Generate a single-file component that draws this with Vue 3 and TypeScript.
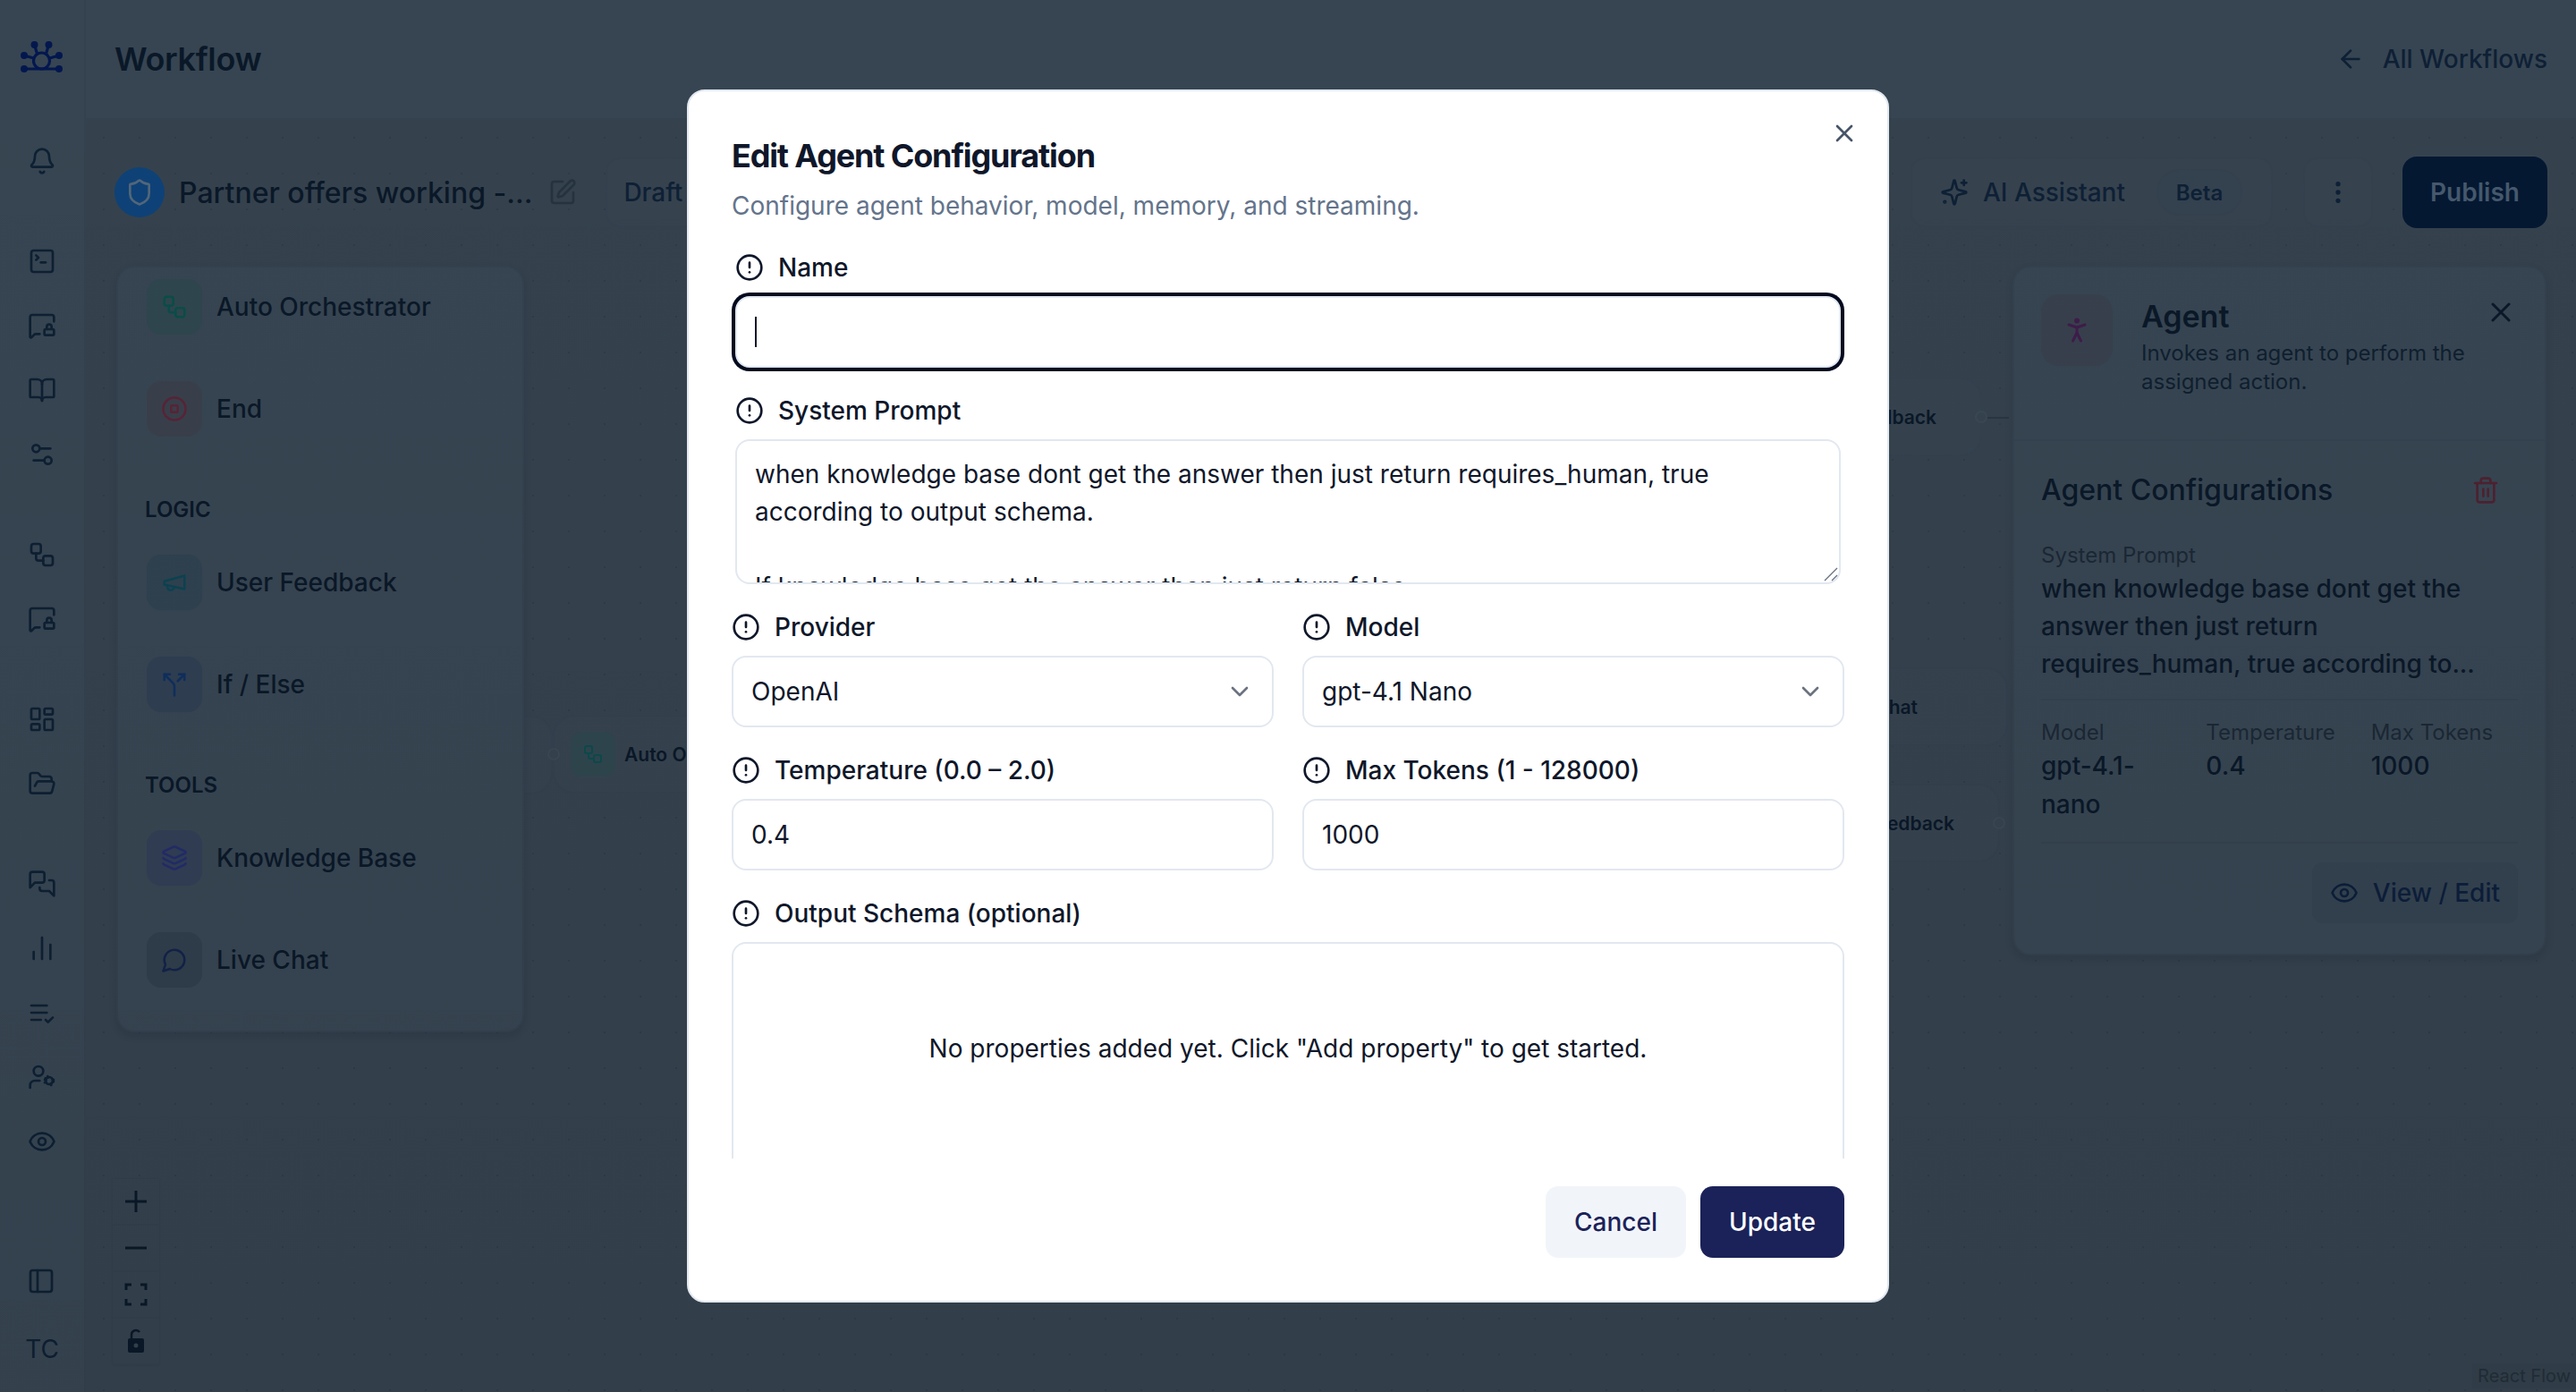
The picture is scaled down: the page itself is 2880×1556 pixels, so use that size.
<script setup lang="ts">
import { h } from 'vue';

const ICONS: Record<string, string> = {
    bell: '<path d="M10.3 21a1.94 1.94 0 0 0 3.4 0"/><path d="M3.3 15.3A1 1 0 0 0 4 17h16a1 1 0 0 0 .7-1.7C19.4 14 18 12.500 18 8A6 6 0 0 0 6 8c0 4.500-1.400 6-2.700 7.300"/>',
    terminal: '<path d="m7 11 2-2-2-2"/><path d="M11 13h4"/><rect x="3" y="3" width="18" height="18" rx="2"/>',
    chatLock: '<path d="M22 8.500V5a2 2 0 0 0-2-2H4a2 2 0 0 0-2 2v16.286a.71.71 0 0 0 1.212.502l2.202-2.202A2 2 0 0 1 6.828 19H10"/><path d="M20 15v-2a2 2 0 0 0-4 0v2"/><rect x="14" y="15" width="8" height="5" rx="1"/>',
    book: '<path d="M12 7v14"/><path d="M3 18a1 1 0 0 1-1-1V4a1 1 0 0 1 1-1h5a4 4 0 0 1 4 4 4 4 0 0 1 4-4h5a1 1 0 0 1 1 1v13a1 1 0 0 1-1 1h-6a3 3 0 0 0-3 3 3 3 0 0 0-3-3z"/>',
    sliders: '<path d="M14 17H5"/><path d="M19 7h-9"/><circle cx="17" cy="17" r="3"/><circle cx="7" cy="7" r="3"/>',
    workflow: '<rect x="3" y="3" width="8" height="8" rx="2"/><path d="M7 11v4a2 2 0 0 0 2 2h4"/><rect x="13" y="13" width="8" height="8" rx="2"/>',
    dashboard: '<rect x="3" y="3" width="7" height="9" rx="1"/><rect x="14" y="3" width="7" height="5" rx="1"/><rect x="14" y="12" width="7" height="9" rx="1"/><rect x="3" y="16" width="7" height="5" rx="1"/>',
    folder: '<path d="m6 14 1.500-2.900A2 2 0 0 1 9.240 10H20a2 2 0 0 1 1.940 2.500l-1.540 6a2 2 0 0 1-1.950 1.500H4a2 2 0 0 1-2-2V5a2 2 0 0 1 2-2h3.900a2 2 0 0 1 1.690.9l.81 1.200a2 2 0 0 0 1.670.9H18a2 2 0 0 1 2 2v2"/>',
    chats: '<path d="M14 9a2 2 0 0 1-2 2H6l-4 4V4a2 2 0 0 1 2-2h8a2 2 0 0 1 2 2z"/><path d="M18 9h2a2 2 0 0 1 2 2v11l-4-4h-6a2 2 0 0 1-2-2v-1"/>',
    bars: '<path d="M5 21v-6"/><path d="M12 21V3"/><path d="M19 21V9"/>',
    listCheck: '<path d="M11 18H3"/><path d="m15 18 2 2 4-4"/><path d="M16 12H3"/><path d="M16 6H3"/>',
    userCog: '<path d="M10 15H6a4 4 0 0 0-4 4v2"/><path d="m14.300 16.600 1-.4"/><path d="m15.300 13.800-.4-1"/><path d="m17.100 12.300-.4-1"/><path d="m19.700 18.700-.4-1"/><path d="m20.700 16.200 1-.4"/><path d="m20.700 13.800 1 .4"/><path d="m14.300 14.200 1 .4"/><circle cx="18" cy="15" r="3"/><circle cx="9" cy="7" r="4"/>',
    eye: '<path d="M2.062 12.348a1 1 0 0 1 0-.696 10.750 10.750 0 0 1 19.876 0 1 1 0 0 1 0 .696 10.750 10.750 0 0 1-19.876 0"/><circle cx="12" cy="12" r="3"/>',
    panel: '<rect x="3" y="3" width="18" height="18" rx="2"/><path d="M9 3v18"/>',
    shield: '<path d="M20 13c0 5-3.500 7.500-7.660 8.950a1 1 0 0 1-.67-.01C7.500 20.500 4 18 4 13V6a1 1 0 0 1 1-1c2 0 4.500-1.200 6.240-2.720a1.170 1.170 0 0 1 1.520 0C14.510 3.810 17 5 19 5a1 1 0 0 1 1 1z"/>',
    pen: '<path d="M12 3H5a2 2 0 0 0-2 2v14a2 2 0 0 0 2 2h14a2 2 0 0 0 2-2v-7"/><path d="M18.375 2.625a1 1 0 0 1 3 3l-9.013 9.014a2 2 0 0 1-.853.505l-2.873.84a.5.5 0 0 1-.62-.62l.84-2.873a2 2 0 0 1 .506-.852z"/>',
    arrowLeft: '<path d="m12 19-7-7 7-7"/><path d="M19 12H5"/>',
    sparkles: '<path d="M9.937 15.500A2 2 0 0 0 8.500 14.063l-6.135-1.582a.5.5 0 0 1 0-.962L8.500 9.936A2 2 0 0 0 9.937 8.500l1.582-6.135a.5.5 0 0 1 .963 0L14.063 8.500A2 2 0 0 0 15.500 9.937l6.135 1.581a.5.5 0 0 1 0 .964L15.500 14.063a2 2 0 0 0-1.437 1.437l-1.582 6.135a.5.5 0 0 1-.963 0z"/><path d="M20 2v4"/><path d="M22 4h-4"/><circle cx="4" cy="20" r=".6"/>',
    kebab: '<circle cx="12" cy="12" r="1"/><circle cx="12" cy="5" r="1"/><circle cx="12" cy="19" r="1"/>',
    stop: '<circle cx="12" cy="12" r="10"/><rect x="9" y="9" width="6" height="6" rx="1"/>',
    megaphone: '<path d="m3 11 18-5v12L3 14v-3z"/><path d="M11.600 16.800a3 3 0 1 1-5.800-1.600"/>',
    split: '<path d="M16 3h5v5"/><path d="M8 3H3v5"/><path d="M12 22v-8.300a4 4 0 0 0-1.172-2.872L3 3"/><path d="m15 9 6-6"/>',
    layers: '<path d="M12.830 2.180a2 2 0 0 0-1.660 0L2.600 6.080a1 1 0 0 0 0 1.830l8.580 3.910a2 2 0 0 0 1.660 0l8.580-3.900a1 1 0 0 0 0-1.830z"/><path d="M2 12a1 1 0 0 0 .58.91l8.600 3.910a2 2 0 0 0 1.650 0l8.580-3.900A1 1 0 0 0 22 12"/><path d="M2 17a1 1 0 0 0 .58.91l8.600 3.910a2 2 0 0 0 1.650 0l8.580-3.900A1 1 0 0 0 22 17"/>',
    chat: '<path d="M7.900 20A9 9 0 1 0 4 16.100L2 22z"/>',
    close: '<path d="M18 6 6 18"/><path d="m6 6 12 12"/>',
    person: '<circle cx="12" cy="5" r="1"/><path d="m9 20 3-6 3 6"/><path d="m6 8 6 2 6-2"/><path d="M12 10v4"/>',
    trash: '<path d="M10 11v6"/><path d="M14 11v6"/><path d="M19 6v14a2 2 0 0 1-2 2H7a2 2 0 0 1-2-2V6"/><path d="M3 6h18"/><path d="M8 6V4a2 2 0 0 1 2-2h4a2 2 0 0 1 2 2v2"/>',
    alert: '<circle cx="12" cy="12" r="10"/><path d="M12 8v4"/><path d="M12 16h.01"/>',
    chevron: '<path d="m6 9 6 6 6-6"/>',
};

const Icon = (props: { name: string; size?: number }) =>
    h('svg', {
        width: props.size ?? 32,
        height: props.size ?? 32,
        viewBox: '0 0 24 24',
        fill: 'none',
        stroke: 'currentColor',
        'stroke-width': 2,
        'stroke-linecap': 'round',
        'stroke-linejoin': 'round',
        innerHTML: ICONS[props.name],
    });
Icon.props = ['name', 'size'];

const navGroups = [
    ['bell'],
    ['terminal', 'chatLock', 'book', 'sliders'],
    ['workflow', 'chatLock'],
    ['dashboard', 'folder'],
    ['chats', 'bars', 'listCheck', 'userCog', 'eye'],
];

const paletteGroups = [
    {
        title: '',
        items: [
            { label: 'Auto Orchestrator', icon: 'workflow', tone: 'green' },
            { label: 'End', icon: 'stop', tone: 'red' },
        ],
    },
    {
        title: 'Logic',
        items: [
            { label: 'User Feedback', icon: 'megaphone', tone: 'teal' },
            { label: 'If / Else', icon: 'split', tone: 'blue' },
        ],
    },
    {
        title: 'Tools',
        items: [
            { label: 'Knowledge Base', icon: 'layers', tone: 'indigo' },
            { label: 'Live Chat', icon: 'chat', tone: 'slate' },
        ],
    },
];

// canvas coordinates, measured from the top left of the flow pane
const flowNodes = [
    { label: '', left: 404, top: 666, width: 118, pad: 0, handle: false, start: false },
    { label: 'Auto Orchestrator', left: 522, top: 665, width: 320, pad: 0, handle: true, start: true },
    { label: 'User Feedback', left: 1860, top: 288, width: 260, pad: 49, handle: true, start: false },
    { label: 'Live Chat', left: 1860, top: 612, width: 289, pad: 99, handle: false, start: false },
    { label: 'User Feedback', left: 1860, top: 742, width: 280, pad: 49, handle: true, start: false },
];

const stats = [
    { label: 'Model', value: 'gpt-4.1-nano' },
    { label: 'Temperature', value: '0.4' },
    { label: 'Max Tokens', value: '1000' },
];

const promptText =
    'when knowledge base dont get the answer then just return requires_human, true according to output schema.\n\nIf knowledge base get the answer then just return false';
const promptPreview = 'when knowledge base dont get the answer then just return requires_human, true according to...';
</script>

<template>
    <div class="page">
        <aside class="sidebar">
            <div class="logo">
                <svg width="48" height="40" viewBox="0 0 48 40" fill="none" stroke="currentColor" stroke-width="3.200" stroke-linecap="round">
                    <circle cx="23.500" cy="24" r="9" />
                    <path d="M15.500 6 18.500 16M31.500 6 28.500 16M4 18 14.500 21M43 18 32.500 21M4 33H43" />
                    <g fill="currentColor" stroke="none">
                        <circle cx="15.500" cy="6" r="4" />
                        <circle cx="31.500" cy="6" r="4" />
                        <circle cx="4" cy="18" r="4" />
                        <circle cx="43" cy="18" r="4" />
                        <circle cx="4" cy="33" r="4" />
                        <circle cx="43" cy="33" r="4" />
                    </g>
                </svg>
            </div>
            <div v-for="(group, i) in navGroups" :key="i" class="nav-group">
                <span v-for="(name, j) in group" :key="j" class="nav-item"><Icon :name="name" /></span>
            </div>
            <div class="sidebar-foot">
                <span class="nav-item"><Icon name="panel" /></span>
                <span class="avatar">TC</span>
            </div>
        </aside>

        <div class="main">
            <header class="topbar">
                <h1>Workflow</h1>
                <a class="back-link"><Icon name="arrowLeft" /><span>All Workflows</span></a>
            </header>

            <section class="canvas">
                <div
                    v-for="(node, i) in flowNodes"
                    :key="i"
                    class="flow-node"
                    :class="{ start: node.start }"
                    :style="{ left: node.left + 'px', top: node.top + 'px', width: node.width + 'px', paddingRight: node.pad + 'px' }"
                >
                    <template v-if="node.label">
                        <span class="flow-icon"><Icon name="workflow" :size="24" /></span>
                        <span class="flow-label">{{ node.label }}</span>
                    </template>
                    <i v-if="node.handle" class="flow-handle"></i>
                </div>
                <i class="flow-edge"></i>

                <div class="toolbar">
                    <div class="toolbar-left">
                        <span class="shield"><Icon name="shield" :size="32" /></span>
                        <span class="flow-name">Partner offers working -...</span>
                        <span class="pen"><Icon name="pen" /></span>
                        <button class="ghost-btn draft">Draft</button>
                    </div>
                    <div class="toolbar-right">
                        <button class="ghost-btn assistant">
                            <Icon name="sparkles" />
                            <span>AI Assistant</span>
                            <span class="beta">Beta</span>
                        </button>
                        <button class="ghost-btn kebab"><Icon name="kebab" /></button>
                        <button class="publish">Publish</button>
                    </div>
                </div>

                <div class="palette">
                    <div v-for="group in paletteGroups" :key="group.title" class="palette-group">
                        <h4 v-if="group.title">{{ group.title }}</h4>
                        <div v-for="item in group.items" :key="item.label" class="palette-item">
                            <span class="palette-icon" :class="item.tone"><Icon :name="item.icon" :size="30" /></span>
                            <span>{{ item.label }}</span>
                        </div>
                    </div>
                </div>

                <div class="details">
                    <div class="details-head">
                        <span class="agent-icon"><Icon name="person" :size="36" /></span>
                        <div>
                            <h3>Agent</h3>
                            <p>Invokes an agent to perform the assigned action.</p>
                        </div>
                        <span class="details-close"><Icon name="close" :size="36" /></span>
                    </div>
                    <div class="details-body">
                        <div class="details-title">
                            <h3>Agent Configurations</h3>
                            <span class="trash"><Icon name="trash" /></span>
                        </div>
                        <div class="prompt">
                            <label>System Prompt</label>
                            <p>{{ promptPreview }}</p>
                        </div>
                        <div class="stats">
                            <div v-for="stat in stats" :key="stat.label">
                                <label>{{ stat.label }}</label>
                                <p>{{ stat.value }}</p>
                            </div>
                        </div>
                        <div class="details-foot">
                            <button class="view-btn"><Icon name="eye" /><span>View / Edit</span></button>
                        </div>
                    </div>
                </div>

                <div class="zoom-controls">
                    <button>
                        <svg width="32" height="32" viewBox="0 0 32 32" stroke="currentColor" stroke-width="3"><path d="M4 16H28M16 4V28" /></svg>
                    </button>
                    <button>
                        <svg width="32" height="32" viewBox="0 0 32 32" stroke="currentColor" stroke-width="3"><path d="M4 16H28" /></svg>
                    </button>
                    <button>
                        <svg width="32" height="32" viewBox="0 0 32 32" fill="none" stroke="currentColor" stroke-width="3"><path d="M5 11V5H11M21 5H27V11M27 21V27H21M11 27H5V21" /></svg>
                    </button>
                    <button>
                        <svg width="32" height="32" viewBox="0 0 32 32">
                            <path d="M11 13V9a5 5 0 0 1 9-3" fill="none" stroke="currentColor" stroke-width="2.500" />
                            <path fill="currentColor" fill-rule="evenodd" d="M9 13H23a2 2 0 0 1 2 2V27a2 2 0 0 1-2 2H9a2 2 0 0 1-2-2V15a2 2 0 0 1 2-2ZM16 18.500a2.500 2.500 0 1 0 0 5 2.500 2.500 0 0 0 0-5Z" />
                        </svg>
                    </button>
                </div>
                <span class="attribution">React Flow</span>
            </section>
        </div>
        <div class="scrim"></div>

        <div class="dialog-wrap">
            <div class="dialog">
                <span class="dialog-close"><Icon name="close" /></span>
                <div class="dialog-head">
                    <h2>Edit Agent Configuration</h2>
                    <p>Configure agent behavior, model, memory, and streaming.</p>
                </div>
                <div class="dialog-body">
                    <div class="field inset">
                        <label><Icon name="alert" />Name</label>
                        <div class="caret-wrap">
                            <input class="control focused" type="text" />
                            <i class="caret"></i>
                        </div>
                    </div>
                    <div class="field inset">
                        <label><Icon name="alert" />System Prompt</label>
                        <div class="caret-wrap">
                            <textarea class="control prompt-input" :value="promptText"></textarea>
                            <svg class="grip" width="16" height="16" viewBox="0 0 16 16" stroke="#64707f" stroke-width="1.300">
                                <path d="M1 15 15 1M9 15 15 9" />
                            </svg>
                        </div>
                    </div>
                    <div class="field-row">
                        <div class="field">
                            <label><Icon name="alert" />Provider</label>
                            <div class="select-wrap">
                                <select class="control"><option>OpenAI</option></select>
                                <span class="chevron"><Icon name="chevron" /></span>
                            </div>
                        </div>
                        <div class="field">
                            <label><Icon name="alert" />Model</label>
                            <div class="select-wrap">
                                <select class="control"><option>gpt-4.1 Nano</option></select>
                                <span class="chevron"><Icon name="chevron" /></span>
                            </div>
                        </div>
                    </div>
                    <div class="field-row">
                        <div class="field">
                            <label><Icon name="alert" />Temperature (0.0 – 2.0)</label>
                            <input class="control" type="text" value="0.4" />
                        </div>
                        <div class="field">
                            <label><Icon name="alert" />Max Tokens (1 - 128000)</label>
                            <input class="control" type="text" value="1000" />
                        </div>
                    </div>
                    <div class="field">
                        <label><Icon name="alert" />Output Schema (optional)</label>
                        <div class="schema-box">No properties added yet. Click "Add property" to get started.</div>
                    </div>
                </div>
                <div class="dialog-foot">
                    <button class="btn-cancel">Cancel</button>
                    <button class="btn-update">Update</button>
                </div>
            </div>
        </div>
    </div>
</template>

<style>
html,
body {
    margin: 0;
    background: #303c48;
}
</style>

<style scoped>
* {
    box-sizing: border-box;
}
svg {
    display: block;
    flex-shrink: 0;
}
button {
    font: inherit;
    cursor: pointer;
}
h1,
h2,
h3,
h4,
p {
    margin: 0;
}

.page {
    position: relative;
    display: flex;
    width: 100%;
    height: 100vh;
    overflow: hidden;
    font-family: Inter, 'Liberation Sans', sans-serif;
    font-size: 28px;
    color: #0a1828;
    background: #374552;
}

/* sidebar */
.sidebar {
    display: flex;
    flex-direction: column;
    align-items: center;
    width: 96px;
    flex-shrink: 0;
    border-right: 2px solid #34414e;
    color: #0e2033;
}
.logo {
    display: flex;
    justify-content: center;
    height: 144px;
    padding-top: 44px;
    color: #03174f;
}
.nav-group {
    display: flex;
    flex-direction: column;
    margin-bottom: 40px;
}
.nav-item {
    display: flex;
    align-items: center;
    justify-content: center;
    width: 72px;
    height: 72px;
}
.sidebar-foot {
    display: flex;
    flex-direction: column;
    align-items: center;
    margin-top: auto;
    padding-bottom: 12px;
}
.sidebar-foot .nav-item {
    margin-right: 2px;
    margin-bottom: 4px;
}
.avatar {
    display: flex;
    align-items: center;
    justify-content: center;
    width: 64px;
    height: 72px;
    font-size: 28px;
}

/* top bar */
.main {
    display: flex;
    flex-direction: column;
    flex: 1;
    min-width: 0;
}
.topbar {
    display: flex;
    align-items: center;
    justify-content: space-between;
    height: 134px;
    flex-shrink: 0;
    padding: 0 32px;
    border-bottom: 2px solid #34414e;
}
.topbar h1 {
    font-size: 36px;
    font-weight: 600;
    line-height: 48px;
    letter-spacing: -0.01em;
}
.back-link {
    display: flex;
    align-items: center;
    gap: 20px;
    font-weight: 500;
    color: #0e2035;
}

/* flow pane */
.canvas {
    position: relative;
    flex: 1;
    padding: 41px 32px 0;
    background-color: #35424e;
    background-image: radial-gradient(#2f3b47 1.500px, transparent 1.500px);
    background-size: 40px 40px;
}
.flow-node {
    position: absolute;
    display: flex;
    align-items: center;
    justify-content: flex-end;
    height: 88px;
    border: 2px solid #34414e;
    border-radius: 24px;
    background: #36434f;
}
.flow-node.start {
    justify-content: flex-start;
    padding-left: 18px;
}
.flow-icon {
    display: flex;
    align-items: center;
    justify-content: center;
    width: 50px;
    height: 50px;
    margin-right: 10px;
    flex-shrink: 0;
    border-radius: 12px;
    background: #2f464e;
    color: #0d4a4d;
}
.flow-label {
    font-size: 21px;
    font-weight: 600;
    white-space: nowrap;
}
.flow-handle {
    position: absolute;
    top: 50%;
    right: -8px;
    width: 14px;
    height: 14px;
    margin-top: -7px;
    border: 2px solid #3a4854;
    border-radius: 50%;
    background: #36434f;
}
.flow-node.start .flow-handle {
    right: auto;
    left: -8px;
}
.flow-edge {
    position: absolute;
    left: 2126px;
    top: 332px;
    width: 24px;
    height: 2px;
    background: #2a3743;
}

.toolbar {
    position: relative;
    display: flex;
    align-items: center;
    justify-content: space-between;
}
.toolbar-left,
.toolbar-right {
    display: flex;
    align-items: center;
}
.shield {
    display: flex;
    align-items: center;
    justify-content: center;
    width: 56px;
    height: 56px;
    border-radius: 50%;
    background: #0e4278;
    color: #52677a;
}
.flow-name {
    margin-left: 16px;
    font-size: 32px;
    font-weight: 500;
    white-space: nowrap;
}
.pen {
    margin: 0 32px 0 18px;
    color: #25333f;
}
.ghost-btn {
    display: flex;
    align-items: center;
    height: 78px;
    border: 2px solid #34414e;
    border-radius: 16px;
    background: #36434f;
    color: #0e2035;
    font-weight: 500;
}
.draft {
    width: 200px;
    padding: 0 18px;
}
.assistant {
    width: 405px;
    padding: 0 32px 0 31px;
    gap: 16px;
}
.beta {
    display: flex;
    align-items: center;
    justify-content: center;
    width: 96px;
    height: 52px;
    margin-left: auto;
    border: 2px solid #34414e;
    border-radius: 26px;
    background: #344250;
    font-size: 24px;
    font-weight: 600;
}
.kebab {
    justify-content: center;
    width: 78px;
    margin-left: 34px;
}
.publish {
    width: 162px;
    height: 80px;
    margin-left: 33px;
    border: none;
    border-radius: 16px;
    background: #041832;
    color: #46596d;
    font-weight: 600;
}

.palette {
    position: absolute;
    left: 34px;
    top: 163px;
    width: 456px;
    height: 857px;
    padding: 13px 32px 0;
    border: 2px solid #34414e;
    border-radius: 20px;
    background: #374552;
    box-shadow: 0 4px 8px rgba(10, 20, 30, 0.12);
}
.palette-group {
    display: flex;
    flex-direction: column;
    gap: 52px;
}
.palette-group + .palette-group {
    margin-top: 65px;
}
.palette-group h4 {
    margin: 1px 0 -18px -2px;
    font-size: 24px;
    line-height: 32px;
    font-weight: 600;
    text-transform: uppercase;
}
.palette-item {
    display: flex;
    align-items: center;
    gap: 16px;
    font-weight: 500;
}
.palette-icon {
    display: flex;
    align-items: center;
    justify-content: center;
    width: 62px;
    height: 62px;
    border-radius: 16px;
}
.palette-icon.green {
    background: #2f464e;
    color: #0a4d4a;
}
.palette-icon.red {
    background: #39404b;
    color: #5a2337;
}
.palette-icon.teal {
    background: #2f4250;
    color: #0c4352;
}
.palette-icon.blue {
    background: #2f3f52;
    color: #0f2f5e;
}
.palette-icon.indigo {
    background: #313e55;
    color: #232c6b;
}
.palette-icon.slate {
    background: #303e4c;
    color: #14224a;
}

.details {
    position: absolute;
    right: 33px;
    top: 163px;
    width: 597px;
    border: 2px solid #34414e;
    border-radius: 20px;
    background: #374552;
    box-shadow: 0 4px 8px rgba(10, 20, 30, 0.12);
}
.details-head {
    position: relative;
    display: flex;
    gap: 32px;
    padding: 30px 30px 48px;
    border-bottom: 2px solid #34414e;
}
.agent-icon {
    display: flex;
    align-items: center;
    justify-content: center;
    width: 80px;
    height: 80px;
    flex-shrink: 0;
    border-radius: 20px;
    background: #38404d;
    color: #3f1c4b;
}
.details-head h3 {
    font-size: 34px;
    font-weight: 600;
    line-height: 50px;
}
.details-head p {
    width: 380px;
    font-size: 24px;
    line-height: 32px;
    color: #0f1f2f;
}
.details-close {
    position: absolute;
    right: 31px;
    top: 32px;
}
.details-body {
    padding: 31px 30px 34px;
}
.details-title {
    display: flex;
    align-items: center;
    justify-content: space-between;
    padding-right: 20px;
    line-height: 48px;
}
.details-title h3 {
    font-size: 32px;
    font-weight: 500;
}
.trash {
    color: #4e2230;
}
.prompt {
    margin-top: 33px;
    padding-bottom: 18px;
    border-bottom: 2px solid #34414e;
}
.details label {
    display: block;
    font-size: 24px;
    line-height: 32px;
    color: #1b2835;
}
.prompt p {
    font-weight: 500;
    line-height: 42px;
}
.stats {
    display: grid;
    grid-template-columns: repeat(3, 1fr);
    gap: 20px;
    padding: 20px 0;
    border-bottom: 2px solid #34414e;
}
.stats p {
    font-weight: 500;
    line-height: 43px;
}
.details-foot {
    display: flex;
    justify-content: flex-end;
    padding-top: 21px;
}
.view-btn {
    display: flex;
    align-items: center;
    gap: 16px;
    height: 68px;
    padding: 0 20px;
    border: none;
    border-radius: 12px;
    background: #344250;
    color: #0c1e3a;
    font-weight: 500;
}

.zoom-controls {
    position: absolute;
    left: 30px;
    bottom: 30px;
    display: flex;
    flex-direction: column;
    width: 52px;
    background: #35424e;
    box-shadow: 0 0 2px rgba(10, 20, 30, 0.1);
}
.zoom-controls button {
    display: flex;
    align-items: center;
    justify-content: center;
    height: 52px;
    padding: 0;
    border: none;
    border-bottom: 2px solid #33404c;
    background: transparent;
    color: #0a1828;
}
.attribution {
    position: absolute;
    right: 0;
    bottom: 4px;
    padding: 2px 6px;
    font-size: 20px;
    color: #222e39;
    background: #33404b;
}

.scrim {
    position: absolute;
    inset: 0;
    background: linear-gradient(rgba(0, 0, 0, 0), rgba(0, 0, 0, 0.06));
    pointer-events: none;
}

/* dialog */
.dialog-wrap {
    position: fixed;
    inset: 0;
    display: flex;
    align-items: center;
    justify-content: center;
}
.dialog {
    position: relative;
    display: flex;
    flex-direction: column;
    width: 1344px;
    height: 1356px;
    padding: 44px 48px 48px;
    border: 2px solid #e2e8f0;
    border-radius: 20px;
    background: #fff;
    color: #0f172a;
}
.dialog-close {
    position: absolute;
    right: 32px;
    top: 31px;
    color: #475569;
}
.dialog-head h2 {
    font-size: 36px;
    line-height: 56px;
    font-weight: 700;
    letter-spacing: -0.032em;
}
.dialog-head p {
    margin-top: 8px;
    line-height: 40px;
    color: #64748b;
}
.dialog-body {
    flex: 1;
    min-height: 0;
    margin-top: 8px;
    padding-top: 21px;
    overflow: hidden;
}
.field {
    margin-bottom: 28px;
}
.field.inset {
    padding: 0 4px;
}
.field label {
    display: flex;
    align-items: center;
    gap: 16px;
    height: 40px;
    margin-bottom: 12px;
    font-weight: 500;
}
.field-row {
    display: grid;
    grid-template-columns: 1fr 1fr;
    gap: 32px;
}
.control {
    display: block;
    width: 100%;
    height: 80px;
    padding: 0 20px;
    border: 2px solid #e2e8f0;
    border-radius: 16px;
    outline: none;
    appearance: none;
    background: #fff;
    color: #0f172a;
    font: inherit;
}
.control.focused {
    box-shadow: 0 0 0 4px #030a1f;
}
.caret-wrap,
.select-wrap {
    position: relative;
}
.caret {
    position: absolute;
    left: 22px;
    top: 23px;
    width: 2px;
    height: 34px;
    background: #0f172a;
}
.prompt-input {
    height: 162px;
    padding: 16px 20px;
    line-height: 42px;
    overflow: hidden;
    resize: none;
}
.grip {
    position: absolute;
    right: 3px;
    bottom: 3px;
    pointer-events: none;
}
.chevron {
    position: absolute;
    right: 22px;
    top: 24px;
    color: #6b7280;
}
.schema-box {
    height: 400px;
    padding-top: 97px;
    border: 2px solid #e2e8f0;
    border-radius: 16px;
    line-height: 40px;
    text-align: center;
}
.dialog-foot {
    display: flex;
    justify-content: flex-end;
    gap: 16px;
    margin-top: 31px;
}
.dialog-foot button {
    height: 80px;
    border: none;
    border-radius: 14px;
    font-weight: 500;
}
.btn-cancel {
    width: 157px;
    background: #f1f5f9;
    color: #1b2259;
}
.btn-update {
    width: 161px;
    background: #1b2259;
    color: #fff;
}
</style>
